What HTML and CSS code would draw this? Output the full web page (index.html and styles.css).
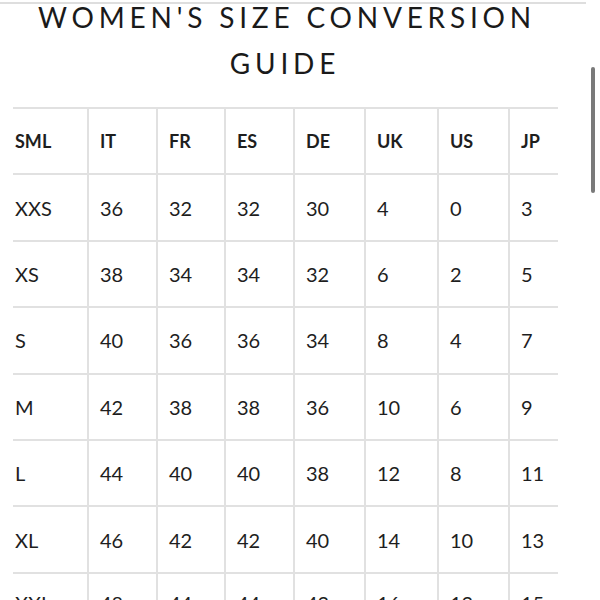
FILE: index.html
```html
<!DOCTYPE html>
<html lang="en">
<head>
<meta charset="utf-8">
<title>Women's Size Conversion Guide</title>
<link rel="stylesheet" href="styles.css">
</head>
<body>
<div class="page">
  <div class="top-rule"></div>
  <h1 class="title">WOMEN'S SIZE CONVERSION<br>GUIDE</h1>
  <div class="chart">
    <div class="cell head first">SML</div><div class="cell head">IT</div><div class="cell head">FR</div><div class="cell head">ES</div><div class="cell head">DE</div><div class="cell head">UK</div><div class="cell head">US</div><div class="cell head">JP</div>
    <div class="cell first">XXS</div><div class="cell">36</div><div class="cell">32</div><div class="cell">32</div><div class="cell">30</div><div class="cell">4</div><div class="cell">0</div><div class="cell">3</div>
    <div class="cell first">XS</div><div class="cell">38</div><div class="cell">34</div><div class="cell">34</div><div class="cell">32</div><div class="cell">6</div><div class="cell">2</div><div class="cell">5</div>
    <div class="cell first">S</div><div class="cell">40</div><div class="cell">36</div><div class="cell">36</div><div class="cell">34</div><div class="cell">8</div><div class="cell">4</div><div class="cell">7</div>
    <div class="cell first">M</div><div class="cell">42</div><div class="cell">38</div><div class="cell">38</div><div class="cell">36</div><div class="cell">10</div><div class="cell">6</div><div class="cell">9</div>
    <div class="cell first">L</div><div class="cell">44</div><div class="cell">40</div><div class="cell">40</div><div class="cell">38</div><div class="cell">12</div><div class="cell">8</div><div class="cell">11</div>
    <div class="cell first">XL</div><div class="cell">46</div><div class="cell">42</div><div class="cell">42</div><div class="cell">40</div><div class="cell">14</div><div class="cell">10</div><div class="cell">13</div>
    <div class="cell first tail">XXL</div><div class="cell tail">48</div><div class="cell tail">44</div><div class="cell tail">44</div><div class="cell tail">42</div><div class="cell tail">16</div><div class="cell tail">12</div><div class="cell tail">15</div>
  </div>
</div>
<div class="scroll-thumb"></div>
</body>
</html>
```
FILE: styles.css
```css
html, body {
  margin: 0;
  padding: 0;
  background: #ffffff;
  overflow: hidden;
  height: 600px;
}
body {
  font-family: Lato, "Open Sans", sans-serif;
  color: #1e1e1e;
}
.page {
  width: 586px;
  padding-top: 2px;
}
.top-rule {
  height: 2px;
  background: #dedede;
  width: 586px;
}
.title {
  width: 570px;
  margin: -10px 0 0 0;
  text-align: center;
  font-weight: 400;
  font-size: 28px;
  line-height: 46px;
  letter-spacing: 4.8px;
  color: #1a1a1a;
  text-indent: 4px;
}
.chart {
  margin: 21px 0 0 13px;
  width: 545px;
  display: grid;
  grid-template-columns: 74px 69px 68px 69px 71px 73px 71px 50px;
  grid-auto-rows: 66.4px;
}
.cell {
  box-sizing: border-box;
  border-top: 2px solid #e1e1e1;
  border-left: 2px solid #e1e1e1;
  display: flex;
  align-items: center;
  padding-left: 11px;
  font-size: 20px;
  font-weight: 400;
}
.cell.first {
  border-left: none;
  padding-left: 2px;
}
.cell.tail {
  align-items: flex-start;
  padding-top: 17px;
}
.head {
  font-weight: 700;
  font-size: 18px;
}
.scroll-thumb {
  position: absolute;
  left: 591px;
  top: 67px;
  width: 4px;
  height: 126px;
  border-radius: 2px;
  background: #7a7a7a;
}
```
